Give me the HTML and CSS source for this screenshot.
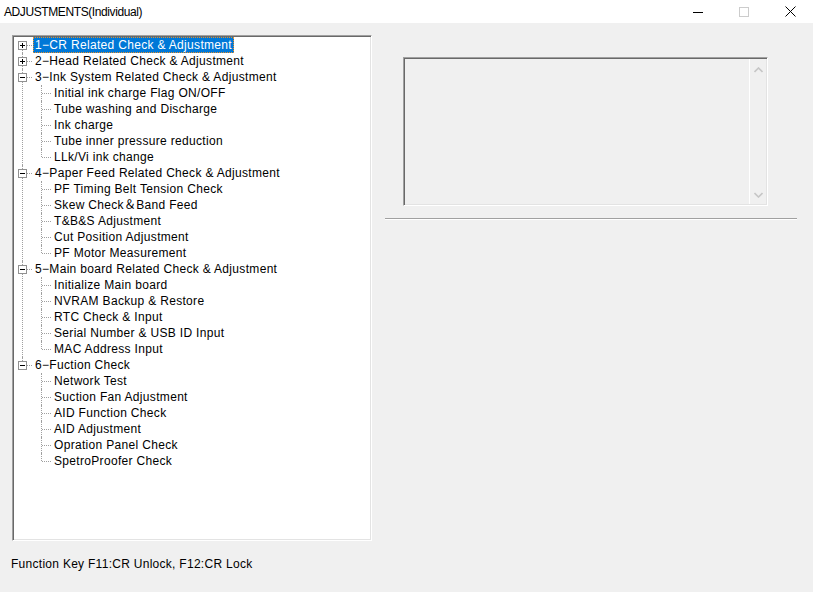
FILE: index.html
```html
<!DOCTYPE html>
<html>
<head>
    <meta charset="UTF-8">
    <title>ADJUSTMENTS(Individual)</title>
    <link rel="stylesheet" href="styles.css">
</head>
<body>
    <div class="titlebar">
        <span class="title">ADJUSTMENTS(Individual)</span>
        <div class="caption-buttons">
            <span class="cap-btn">
                <svg width="10" height="10" viewBox="0 0 10 10"><line x1="0" y1="5.5" x2="10" y2="5.5" stroke="#000" stroke-width="1"/></svg>
            </span>
            <span class="cap-btn">
                <svg width="10" height="10" viewBox="0 0 10 10"><rect x="0.5" y="0.5" width="9" height="9" fill="none" stroke="#cccccc" stroke-width="1"/></svg>
            </span>
            <span class="cap-btn">
                <svg width="11" height="11" viewBox="0 0 11 11"><path d="M0.5 0.5 L10.5 10.5 M10.5 0.5 L0.5 10.5" stroke="#000" stroke-width="1"/></svg>
            </span>
        </div>
    </div>

    <div class="main">
        <div class="tree-box">
            <ul class="tree">
                <li class="closed">
                    <div class="row"><span class="exp"></span><span class="label selected">1−CR Related Check &amp; Adjustment</span></div>
                </li>
                <li class="closed">
                    <div class="row"><span class="exp"></span><span class="label">2−Head Related Check &amp; Adjustment</span></div>
                </li>
                <li class="open">
                    <div class="row"><span class="exp"></span><span class="label">3−Ink System Related Check &amp; Adjustment</span></div>
                    <ul>
                        <li><div class="row"><span class="label">Initial ink charge Flag ON/OFF</span></div></li>
                        <li><div class="row"><span class="label">Tube washing and Discharge</span></div></li>
                        <li><div class="row"><span class="label">Ink charge</span></div></li>
                        <li><div class="row"><span class="label">Tube inner pressure reduction</span></div></li>
                        <li><div class="row"><span class="label">LLk/Vi ink change</span></div></li>
                    </ul>
                </li>
                <li class="open">
                    <div class="row"><span class="exp"></span><span class="label">4−Paper Feed Related Check &amp; Adjustment</span></div>
                    <ul>
                        <li><div class="row"><span class="label">PF Timing Belt Tension Check</span></div></li>
                        <li><div class="row"><span class="label">Skew Check＆Band Feed</span></div></li>
                        <li><div class="row"><span class="label">T&amp;B&amp;S Adjustment</span></div></li>
                        <li><div class="row"><span class="label">Cut Position Adjustment</span></div></li>
                        <li><div class="row"><span class="label">PF Motor Measurement</span></div></li>
                    </ul>
                </li>
                <li class="open">
                    <div class="row"><span class="exp"></span><span class="label">5−Main board Related Check &amp; Adjustment</span></div>
                    <ul>
                        <li><div class="row"><span class="label">Initialize Main board</span></div></li>
                        <li><div class="row"><span class="label">NVRAM Backup &amp; Restore</span></div></li>
                        <li><div class="row"><span class="label">RTC Check &amp; Input</span></div></li>
                        <li><div class="row"><span class="label">Serial Number &amp; USB ID Input</span></div></li>
                        <li><div class="row"><span class="label">MAC Address Input</span></div></li>
                    </ul>
                </li>
                <li class="open">
                    <div class="row"><span class="exp"></span><span class="label">6−Fuction Check</span></div>
                    <ul>
                        <li><div class="row"><span class="label">Network Test</span></div></li>
                        <li><div class="row"><span class="label">Suction Fan Adjustment</span></div></li>
                        <li><div class="row"><span class="label">AID Function Check</span></div></li>
                        <li><div class="row"><span class="label">AID Adjustment</span></div></li>
                        <li><div class="row"><span class="label">Opration Panel Check</span></div></li>
                        <li><div class="row"><span class="label">SpetroProofer Check</span></div></li>
                    </ul>
                </li>
            </ul>
        </div>

        <div class="side">
            <div class="memo">
                <div class="memo-text"></div>
                <div class="vscroll">
                    <svg width="9" height="6" viewBox="0 0 9 6"><path d="M0.5 5 L4.5 1 L8.5 5" fill="none" stroke="#c6c6c6" stroke-width="1.6"/></svg>
                    <svg width="9" height="6" viewBox="0 0 9 6"><path d="M0.5 1 L4.5 5 L8.5 1" fill="none" stroke="#c6c6c6" stroke-width="1.6"/></svg>
                </div>
            </div>
            <div class="separator"></div>
        </div>
    </div>

    <div class="footer">Function Key F11:CR Unlock, F12:CR Lock</div>
</body>
</html>
```

FILE: styles.css
```css
body {
    margin: 0;
    background: #f0f0f0;
    font-family: "Liberation Sans", "Noto Sans CJK JP", sans-serif;
    font-size: 12px;
    color: #000;
    width: 813px;
    height: 592px;
    overflow: hidden;
}
.titlebar {
    height: 23px;
    background: #fff;
    display: flex;
    align-items: center;
    justify-content: space-between;
}
.title {
    padding-left: 4px;
    font-size: 12px;
    letter-spacing: -0.4px;
}
.caption-buttons {
    display: flex;
    height: 100%;
}
.cap-btn {
    width: 46px;
    display: flex;
    align-items: center;
    justify-content: center;
}
.main {
    display: flex;
    padding: 12px 0 0 12px;
}
.tree-box {
    width: 357px;
    height: 503px;
    background: #fff;
    border-top: 1px solid #a0a0a0;
    border-left: 1px solid #a0a0a0;
    border-right: 1px solid #fff;
    border-bottom: 1px solid #fff;
    box-shadow: inset 1px 1px 0 #696969, inset -1px -1px 0 #e3e3e3;
    padding: 1px 0 0 1px;
    letter-spacing: 0.32px;
}
.tree, .tree ul {
    list-style: none;
    margin: 0;
    padding: 0;
}
.tree li {
    position: relative;
}
.row {
    height: 16px;
    display: flex;
    align-items: center;
    padding-left: 19px;
    position: relative;
}
.tree ul .row {
    padding-left: 38px;
}
/* tree lines */
.tree > li::before {
    content: "";
    position: absolute;
    left: 8px;
    top: 0;
    bottom: 0;
    border-left: 1px dotted #a0a0a0;
}
.tree > li:first-child::before {
    top: 8px;
}
.tree > li:last-child::before {
    bottom: auto;
    height: 8px;
}
.tree > li > .row::before {
    content: "";
    position: absolute;
    left: 9px;
    width: 9px;
    top: 8px;
    border-top: 1px dotted #a0a0a0;
}
.tree ul li::before {
    content: "";
    position: absolute;
    left: 27px;
    top: 0;
    bottom: 0;
    border-left: 1px dotted #a0a0a0;
}
.tree ul li:last-child::before {
    bottom: auto;
    height: 8px;
}
.tree ul .row::before {
    content: "";
    position: absolute;
    left: 28px;
    width: 9px;
    top: 8px;
    border-top: 1px dotted #a0a0a0;
}
.exp {
    position: absolute;
    left: 4px;
    top: 4px;
    width: 7px;
    height: 7px;
    border: 1px solid #919191;
    background: #fff;
    z-index: 1;
}
.exp::before, .exp::after {
    content: "";
    position: absolute;
    background: #000;
}
.exp::before {
    left: 1px;
    top: 3px;
    width: 5px;
    height: 1px;
}
.closed .exp::after {
    left: 3px;
    top: 1px;
    width: 1px;
    height: 5px;
}
.label {
    padding: 0 1px;
    line-height: 14px;
    border: 1px solid transparent;
    white-space: nowrap;
}
.label.selected {
    background: #0078d7;
    color: #fff;
    border: 1px dotted #e8902a;
}
.side {
    padding-left: 13px;
}
.memo {
    margin: 22px 0 0 18px;
    width: 361px;
    height: 145px;
    display: flex;
    border-top: 1px solid #a0a0a0;
    border-left: 1px solid #a0a0a0;
    border-right: 1px solid #fff;
    border-bottom: 1px solid #fff;
    box-shadow: inset 1px 1px 0 #696969, inset -1px -1px 0 #e3e3e3;
    padding: 1px;
}
.memo-text {
    flex: 1;
}
.vscroll {
    width: 16px;
    border-left: 1px solid #fff;
    display: flex;
    flex-direction: column;
    justify-content: space-between;
    align-items: center;
    padding: 8px 0 6px;
}
.separator {
    width: 412px;
    margin-top: 12px;
    border-top: 1px solid #a0a0a0;
    border-bottom: 1px solid #fff;
}
.footer {
    padding: 16px 0 0 11px;
    line-height: 14px;
    letter-spacing: 0.28px;
}
```
